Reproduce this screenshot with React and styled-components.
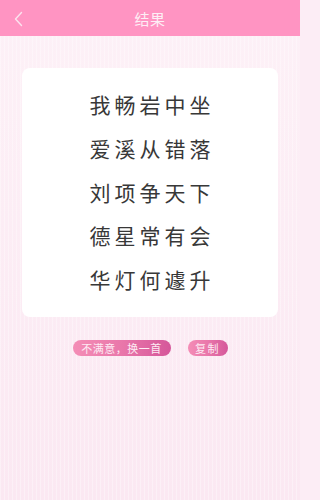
import React from 'react'
import styled, { createGlobalStyle } from 'styled-components'

const GlobalStyle = createGlobalStyle`
    html, body {
        margin: 0;
        padding: 0;
        background: #fcedf5;
    }
    body {
        font-family: "Noto Sans CJK SC", "Noto Sans", sans-serif;
    }
`

const Page = styled.div`
    width: 300px;
    height: 500px;
    display: flex;
    flex-direction: column;
    background-color: #fcedf5;
    background-image: repeating-linear-gradient(
        90deg,
        rgba(255, 255, 255, 0.35) 0px,
        rgba(255, 255, 255, 0.35) 1px,
        rgba(255, 255, 255, 0) 1px,
        rgba(255, 255, 255, 0) 4px
    ), linear-gradient(180deg, #fdf1f7 0%, #fbe8f2 100%);
    overflow: hidden;
`

const Header = styled.header`
    height: 36px;
    flex-shrink: 0;
    display: flex;
    align-items: center;
    justify-content: center;
    position: relative;
    background: #ff94c2;
`

const Back = styled.button`
    position: absolute;
    left: 8px;
    top: 9px;
    width: 20px;
    height: 20px;
    padding: 0;
    border: none;
    background: none;
    display: flex;
    align-items: center;
    justify-content: center;
`

const Title = styled.h1`
    margin: 0;
    font-size: 15px;
    font-weight: 400;
    color: #fdeef5;
    letter-spacing: 0.5px;
`

const Card = styled.div`
    margin: 32px 22px 0;
    height: 249px;
    background: #ffffff;
    border-radius: 8px;
    display: flex;
    flex-direction: column;
    align-items: center;
    justify-content: center;
`

const Line = styled.p`
    margin: 0;
    height: 43.75px;
    line-height: 43.75px;
    font-size: 21px;
    color: #383838;
    letter-spacing: 4px;
    padding-left: 4px;
`

const Actions = styled.div`
    display: flex;
    justify-content: center;
    gap: 17px;
    margin-top: 23px;
`

const Pill = styled.button`
    height: 16px;
    width: ${({ w }) => w}px;
    padding: 0;
    border: none;
    border-radius: 8px;
    background: linear-gradient(90deg, #f48db6 0%, #e977aa 50%, #d5579a 100%);
    color: #fdeaf3;
    font-family: "Noto Sans CJK SC", "Noto Sans", sans-serif;
    font-size: 11px;
    line-height: 16px;
    letter-spacing: ${({ spacing }) => spacing || 0.5}px;
`

const lines = ['我畅岩中坐', '爱溪从错落', '刘项争天下', '德星常有会', '华灯何遽升']

const App = () => {
    return (
        <Page>
            <GlobalStyle />
            <Header>
                <Back aria-label="back">
                    <svg width="11" height="16" viewBox="0 0 11 16">
                        <path d="M8.5 1.5 L2.5 8 L8.5 14.5" fill="none" stroke="#fbe3ef" strokeWidth="1.4" strokeLinecap="round" strokeLinejoin="round" />
                    </svg>
                </Back>
                <Title>结果</Title>
            </Header>
            <Card>
                {lines.map((l) => (
                    <Line key={l}>{l}</Line>
                ))}
            </Card>
            <Actions>
                <Pill w={98}>不满意，换一首</Pill>
                <Pill w={40} spacing={1.5}>复制</Pill>
            </Actions>
        </Page>
    )
}

export default App
